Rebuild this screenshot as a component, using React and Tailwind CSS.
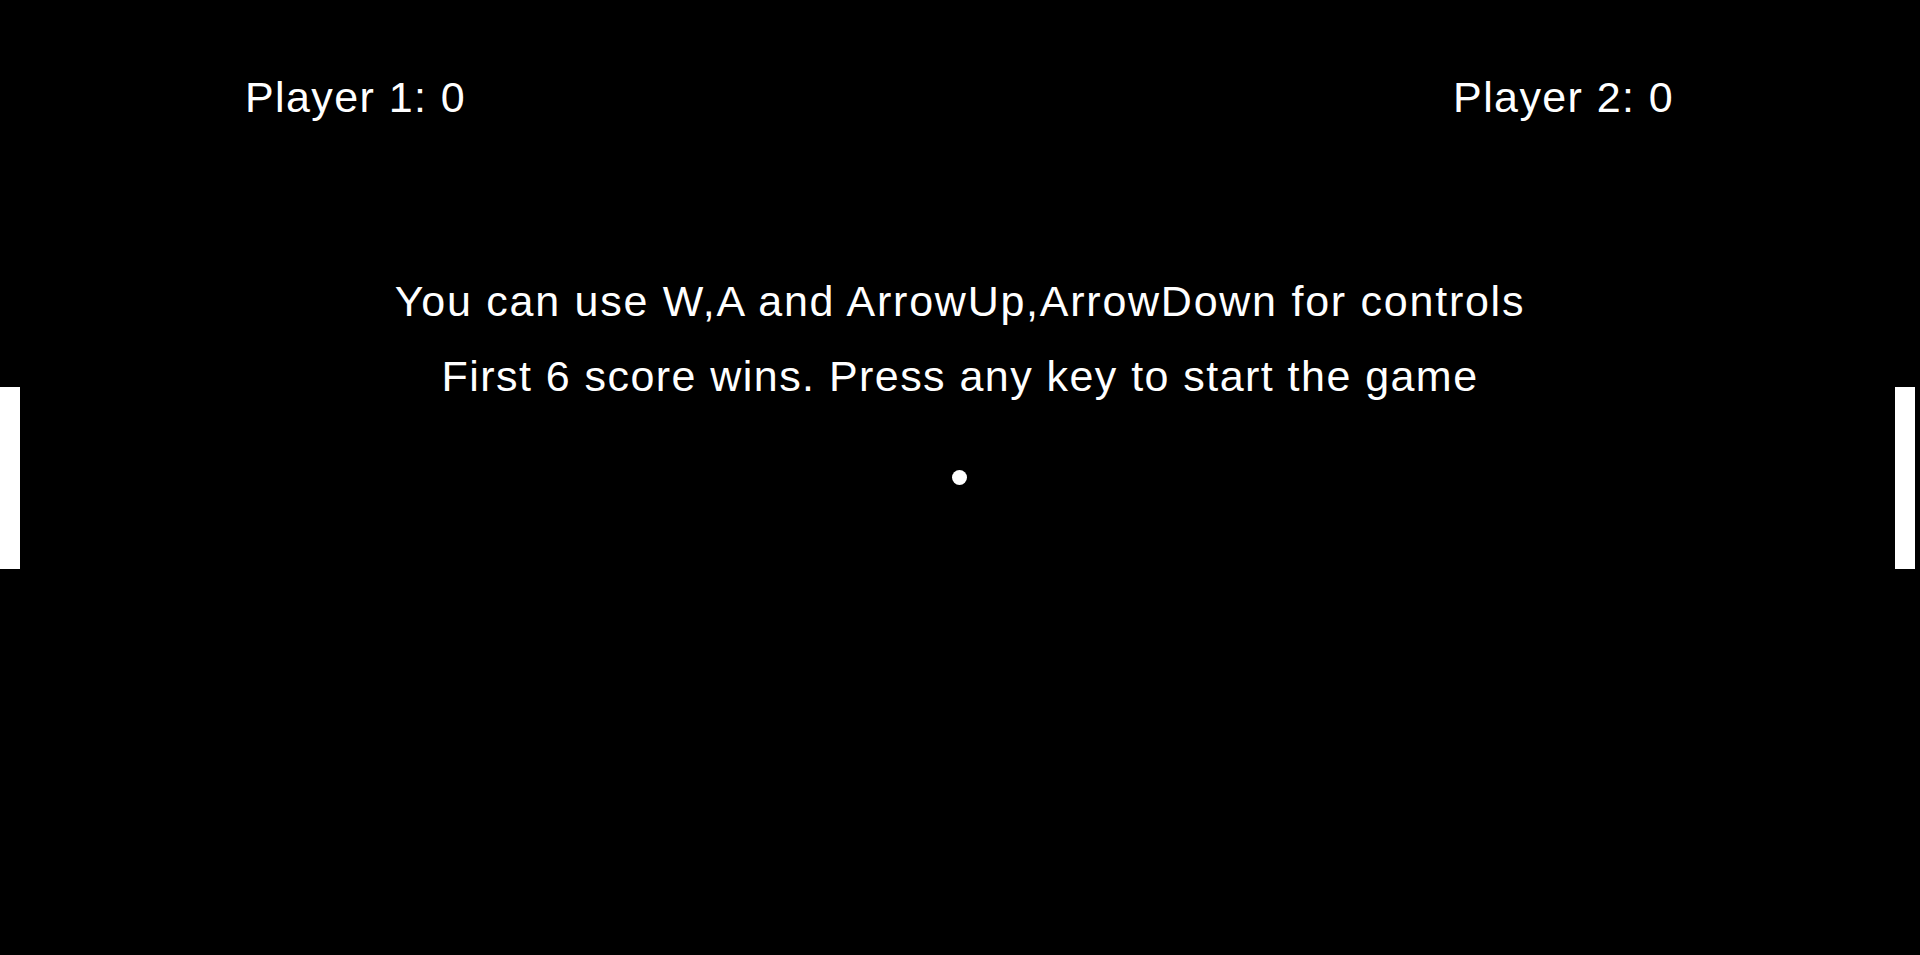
export default function App() {
  return (
    <div
      className="relative w-full h-[955px] bg-black text-white overflow-hidden"
      style={{ fontFamily: '"Liberation Sans", Arial, sans-serif' }}
    >
      <div className="flex justify-between pl-[245px] pr-[246px] pt-[76px] text-[43px] leading-none tracking-[1.4px]">
        <span>Player 1: 0</span>
        <span>Player 2: 0</span>
      </div>
      <div className="flex flex-col items-center mt-[145px] text-[43px] leading-[75px]">
        <p className="tracking-[1.75px]">You can use W,A and ArrowUp,ArrowDown for controls</p>
        <p className="tracking-[1.45px]">First 6 score wins. Press any key to start the game</p>
      </div>
      <div className="absolute left-0 top-[387px] w-[20px] h-[182px] bg-white" />
      <div className="absolute left-[1895px] top-[387px] w-[20px] h-[182px] bg-white" />
      <div className="absolute left-[952px] top-[470px] w-[15px] h-[15px] rounded-full bg-white" />
    </div>
  );
}
